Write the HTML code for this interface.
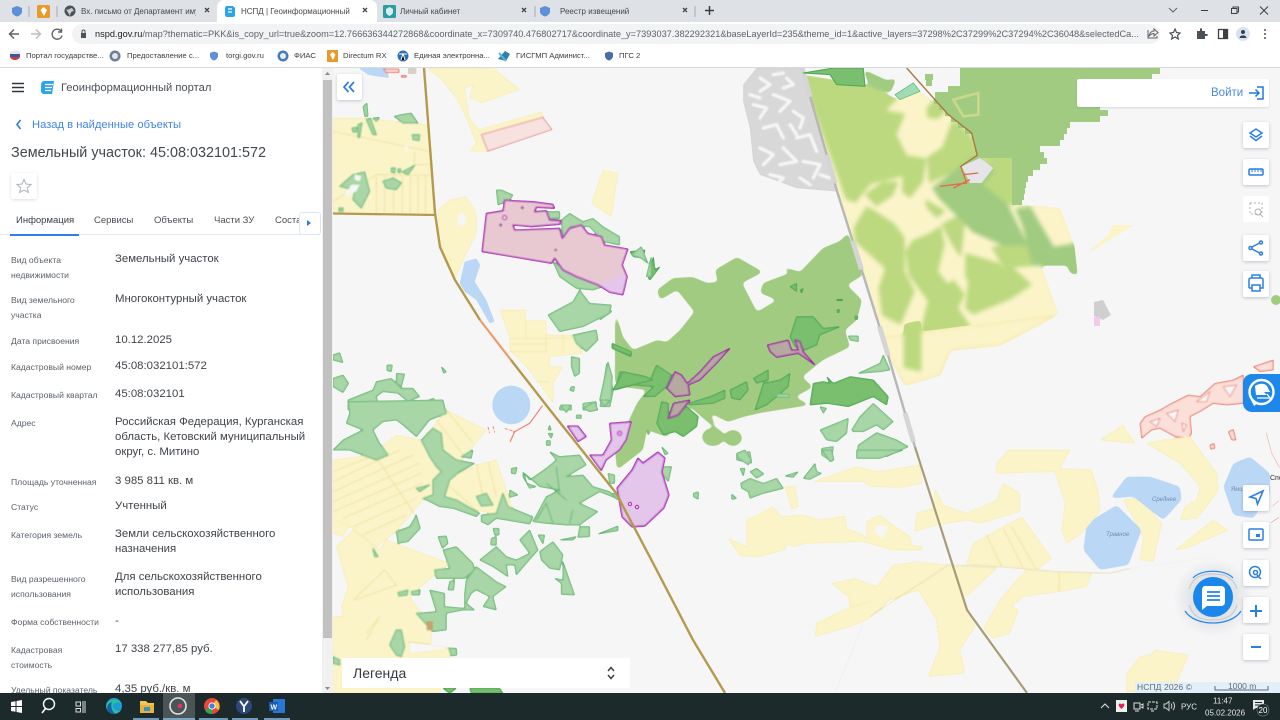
<!DOCTYPE html>
<html lang="ru"><head><meta charset="utf-8"><title>НСПД | Геоинформационный портал</title>
<style>
html,body{margin:0;padding:0;width:1280px;height:720px;overflow:hidden;background:#fff;font-family:"Liberation Sans","DejaVu Sans",sans-serif;color:#3a3f45}
svg{position:absolute;overflow:hidden}
.y{fill:#fbf4c9;stroke:#f5ecb6;stroke-width:2;stroke-linejoin:round}
.g2{fill:#bcd97f;stroke:#bcd97f;stroke-width:8;stroke-linejoin:round}
.g1{fill:#a0cb80;stroke:#a0cb80;stroke-width:6;stroke-linejoin:round}
.f{fill:#a9d6a6;stroke:#69b878;stroke-width:3;stroke-linejoin:round}
.d{fill:#7abf6e;stroke:#4ba556;stroke-width:3;stroke-linejoin:round}
.p{fill:#e3c6ea;stroke:#a92fb2;stroke-width:4;stroke-linejoin:round}
.q{fill:#b5a9a0;stroke:#a02fa8;stroke-width:4;stroke-linejoin:round}
.w{fill:#bad7f5}
.r{fill:#fbdfd9;stroke:#e8786c;stroke-width:3;stroke-linejoin:round}
.ln{fill:none;stroke:#efe3a4;stroke-width:3}
.t{position:absolute;white-space:nowrap}
.b{position:absolute;height:6px;background:#a0cb80}
.btn{position:absolute;left:1243px;width:26px;height:26px;background:#fff;border-radius:2px;box-shadow:0 1px 3px rgba(80,100,130,.35)}
.tab{position:absolute;top:5px;font-size:8px;line-height:13px;color:#45484c;white-space:nowrap}
.bm{position:absolute;top:50px;font-size:7.7px;line-height:12px;color:#3c4043;white-space:nowrap}
.l{position:absolute;left:11px;font-size:8.6px;line-height:15px;color:#5b6269;white-space:nowrap}
.v{position:absolute;left:115px;font-size:11.4px;line-height:17px;color:#3f444a;white-space:nowrap}
.pt{position:absolute;top:214px;font-size:9.5px;line-height:14px;color:#4a4f55;white-space:nowrap}
.lab{font-family:"Liberation Sans",sans-serif;font-size:6px;fill:#6f8fb5;font-style:italic}
</style></head><body>
<svg width="1280" height="720" viewBox="0 0 1280 720" style="left:0;top:0" xmlns="http://www.w3.org/2000/svg">
<defs>
<clipPath id="cm"><rect x="333" y="68" width="947" height="626"/></clipPath>
<pattern id="mh" width="30" height="13" patternUnits="userSpaceOnUse"><path d="M1,4 L13,3 M17,10 L29,9" stroke="#9cc2e6" stroke-width="2.2" fill="none"/></pattern>
<filter id="s" filterUnits="userSpaceOnUse" x="300" y="40" width="1000" height="670" color-interpolation-filters="sRGB"><feGaussianBlur stdDeviation="2"/><feComponentTransfer><feFuncA type="linear" slope="6" intercept="-2.5"/></feComponentTransfer></filter>
<filter id="s2" filterUnits="userSpaceOnUse" x="300" y="40" width="1000" height="670" color-interpolation-filters="sRGB"><feGaussianBlur stdDeviation=".7"/><feComponentTransfer><feFuncA type="linear" slope="4" intercept="-1.5"/></feComponentTransfer></filter>
</defs>
<g clip-path="url(#cm)">
<rect x="333" y="68" width="947" height="626" fill="#f6f6f7"/>

<g filter="url(#s2)"><g transform="translate(740,68) scale(.3333)">
<path fill="#d8d8d9" stroke="#c9c9ca" d="M10,50 L50,0 L185,0 L290,370 L170,360 L60,320 L40,280 L30,180 L10,100Z"/>
<path fill="none" stroke="#f6f6f7" stroke-width="10" stroke-linecap="round" stroke-linejoin="round" d="M60,30 L90,50 L60,70 M140,30 L160,50 L130,60 M100,80 L150,100 L120,130 M40,110 L80,120 L60,150 M160,130 L190,150 L180,180 M70,180 L110,170 L130,210 M170,210 L210,200 L230,250 M60,240 L100,260 L70,290 M130,240 L170,280 L120,290 M190,280 L240,290 L220,330 M90,320 L130,330 L110,350 M180,330 L210,350 M30,80 L60,90 M100,20 L130,15 M150,170 L170,200 M240,320 L270,330"/>
</g></g>

<g filter="url(#s)"><g transform="translate(740,68) scale(.3333)">
<path class="y" d="M190,25 L380,55 L465,95 L540,70 L700,200 L712,262 L815,270 L815,410 L960,420 L1000,530 L940,545 L870,500 L955,740 L680,810 L430,810 L350,560Z"/>
<path class="g2" d="M190,25 L380,55 L465,95 L430,130 L490,140 L465,200 L500,270 L490,320 L390,345 L345,400 L320,390Z"/>
<path class="g2" d="M495,265 L555,275 L545,340 L510,385 L490,370Z"/>
<path class="g2" d="M565,120 L585,100 L610,135 L590,150 L565,145Z"/>
<path class="g2" d="M640,160 L695,210 L712,260 L660,300 L570,340 L565,270 L610,240Z"/>
<path class="g2" d="M710,220 L815,270 L815,410 L730,360 L760,310 L740,270 L712,262Z"/>
<path class="g2" d="M345,480 L380,420 L400,430 L460,470 L490,510 L490,610 L520,670 L480,765 L430,740 L420,660 L440,600 L350,520Z"/>
<path class="g2" d="M520,520 L570,500 L600,480 L610,530 L590,610 L620,650 L570,700 L510,620 L500,550Z"/>
<path class="g2" d="M610,470 L650,450 L670,470 L660,560 L635,520Z"/>
<path class="g2" d="M680,560 L780,590 L780,600 L700,640 L680,630Z"/>
<path class="g2" d="M810,595 L870,650 L810,690 L700,735 L680,720 L690,625 L760,610Z"/>
<path class="g2" d="M540,810 L570,690 L640,640 L670,680 L650,720 L690,780 L620,810Z"/>
<path class="g2" d="M800,530 L860,530 L880,590 L820,595 L790,590 L760,540Z"/>
<path class="g2" d="M560,400 L610,430 L590,445 L565,420Z"/>
<path class="g2" d="M380,380 L430,345 L470,345 L455,380 L410,410Z"/>
<path class="g1" d="M580,360 L660,300 L700,270 L715,265 L760,310 L725,350 L800,410 L860,530 L790,530 L700,490 L640,430 L600,390Z"/>
<path class="g1" d="M830,425 L870,420 L940,540 L1000,530 L1010,620 L990,610 L985,590 L880,590 L850,470Z"/>
<path class="g1" d="M375,10 L440,40 L465,35 L450,70 L390,50Z"/>
</g></g>
<g filter="url(#s)">
<path class="y" d="M880,338 L1057,315 L1000,345 L950,350 L940,375 L905,385Z"/>
<path class="g2" transform="translate(600,250) scale(.3333)" d="M915,225 L960,215 L960,360 L915,350Z"/>
</g>
<g filter="url(#s)" fill="#a0cb80">
<polygon points="680,330 718,282 715,270 737,257 763,272 742,283 757,312 777,300 760,293 763,283 790,273 778,265 800,272 823,248 840,241 848,233 863,275 847,285 862,300 857,320 845,330 850,347 823,360 802,377 700,400"/>
<polygon points="657,290 673,278 693,277 707,283 718,282 722,310 710,320 693,310 677,290 660,300"/>
<polygon points="615,310 623,337 633,350 657,340 667,342 680,330 685,347 710,320 760,330 802,377 813,387 795,397 810,405 760,413 743,417 728,422 710,413 717,430 690,407 667,437 647,430 643,450 617,470 615,450 637,403 647,390 623,387 615,383"/>
<ellipse cx="713" cy="437" rx="11" ry="9"/><ellipse cx="733" cy="438" rx="9" ry="8"/>
</g>

<g filter="url(#s2)"><g transform="translate(600,250) scale(.3333)">
<path class="d" d="M45,420 L60,365 L110,375 L150,390 L170,345 L215,375 L200,410 L165,440 L130,440 L160,410 L100,405Z"/>
<path class="d" d="M170,520 L185,455 L205,460 L205,505 L260,470 L295,500 L290,530 L250,560 L225,545 L190,555Z"/>
<path class="d" d="M265,460 L330,440 L375,420 L375,445 L340,460 L270,465Z"/>
<path class="d" d="M390,420 L440,395 L445,420 L420,450 L395,445Z"/>
<path class="d" d="M460,385 L505,360 L505,390 L470,400Z"/>
<path class="d" d="M465,480 L490,400 L540,390 L570,370 L565,410 L530,440 L500,465Z"/>
<path class="d" d="M570,260 L590,200 L640,200 L670,235 L720,230 L660,255 L650,285 L615,300 L585,290Z"/>
<path class="d" d="M630,465 L640,400 L670,395 L690,400 L680,380 L700,400 L750,380 L820,390 L865,440 L860,465 L820,440 L745,470 L680,460Z"/>
<path class="d" d="M570,110 L590,100 L590,125Z M600,120 L610,115 L605,130Z M710,148 h18 v4 h-18Z M712,178 h6 v10 h-6Z M765,198 h8 v10 h-8Z M90,5 L135,0 L130,25 L100,20Z M145,85 L160,20 L165,60 L180,50 L150,90Z M36,280 L95,310 L92,320 L36,295Z"/>
<path class="f" d="M660,540 L745,505 L740,550 L710,575 L680,570Z"/>
<path class="f" d="M755,540 L780,500 L820,460 L880,515 L850,540 L830,525 L790,545 L760,545Z"/>
<path class="f" d="M770,620 L775,585 L830,548 L890,570 L925,590 L860,620 L790,610Z"/>
<path class="f" d="M775,370 L840,340 L850,315 L870,360 L840,365Z"/>
<path class="f" d="M665,595 L700,590 L695,635 L665,615Z"/>
<path class="f" d="M410,610 L450,605 L455,640 L410,630Z"/>
<path class="f" d="M745,258 L775,258 L775,275 L750,270Z"/>
<path class="f" d="M660,470 L680,475 L670,490Z"/>
<path class="f" d="M180,650 L215,650 L205,695 L185,670Z"/>
<path class="f" d="M0,470 L20,340 L40,420 L30,470Z"/>
<path class="f" d="M0,170 H25 L35,185 L0,210Z"/>
<path class="f" d="M185,590 L205,610 L195,615Z M35,675 L45,690 L30,700Z M140,540 L150,545 L145,555Z"/>
<path class="f" d="M530,432 H568 V442 H530Z"/>
<path class="q" d="M200,415 L225,365 L245,375 L262,400 L300,365 L340,320 L390,295 L350,340 L300,390 L265,405 L270,435 L225,440Z"/>
<path class="q" d="M205,505 L220,460 L270,450 L235,495Z"/>
<path class="q" d="M502,285 L565,270 L575,300 L595,300 L585,270 L600,275 L610,305 L645,345 L595,310 L530,322 L510,305Z"/>
</g></g>

<g filter="url(#s2)"><g transform="translate(1100,360) scale(.3333)">
<path class="r" d="M120,190 L135,170 L180,150 L215,130 L265,105 L300,110 L345,70 L400,60 L430,45 L430,130 L380,135 L340,130 L300,155 L270,170 L275,220 L265,235 L225,230 L180,205 L155,210 L125,235Z"/>
<path fill="#f6f6f7" stroke="#e8786c" stroke-width="2" d="M200,160 L235,150 L225,185Z M290,125 L330,95 L320,125Z M370,80 L410,75 L390,110Z M150,185 L180,175 L170,200Z M245,190 L260,195 L250,215Z"/>
<path class="r" d="M385,215 L400,208 L408,240 L395,240Z M330,255 L342,250 L345,265 L332,268Z M460,20 L520,0 L520,30 L480,35Z"/>
<path fill="none" stroke="#e8786c" stroke-width="3" d="M498,215 L515,280 L540,325 M510,490 L540,470 M515,440 L540,420"/>
<path class="y" d="M0,240 L70,195 L105,250Z"/>
<path class="y" d="M140,250 L190,240 L270,230 L350,340 L355,390 L320,440 L290,475 L240,480 L255,440 L290,420 L300,380 L240,310Z"/>
<path class="y" d="M225,570 L340,480 L385,510 L260,565Z"/>
<path class="y" d="M70,420 L120,410 L185,490 L160,605 L120,600 L130,530Z"/>
<path class="y" d="M80,995 L80,940 L120,890 L150,885 L165,870 L265,885 L220,995Z"/>
</g></g>
<g filter="url(#s)"><g transform="translate(1100,360) scale(.3333)">
<path class="w" d="M30,415 L80,350 L150,350 L240,380 L245,420 L190,480 L150,450 L100,410Z"/>
<path class="w" d="M370,380 L400,310 L450,290 L510,340 L510,400 L460,475 L400,465Z"/>
<path class="w" d="M-50,570 L-40,490 L50,435 L125,510 L85,615 L0,630Z"/>
</g></g>
<text class="lab" x="1152" y="501">Среднее</text>
<text class="lab" x="1106" y="536">Травное</text>
<text class="lab" x="1231" y="491">Ямш</text>
<text x="1270" y="480" font-size="7" fill="#333">Спе</text>
<path d="M1090,250 L1108,235 L1113,225 L1134,225 L1105,243 L1090,252Z" fill="#fbf4c9"/>
<path d="M1094,302 L1103,300 L1111,315 L1103,320 L1094,316Z" fill="#cfcfd0"/>
<path d="M1094,317 H1100 V326 H1094Z" fill="#f6c8ea"/>
<circle cx="1276" cy="300" r="5" fill="#a0cb80"/>

<g filter="url(#s2)"><g transform="translate(650,450) scale(.3333)">
<path class="y" d="M490,95 L620,50 L680,65 L810,45 L815,100 L755,112 L660,110 L640,95Z"/>
<path class="y" d="M405,110 L435,108 L445,170 L425,178Z"/>
<path class="y" d="M235,265 L290,290 L290,210 L370,170 L395,200 L460,195 L510,210 L585,198 L590,235 L630,250 L650,265 L650,215 L690,195 L730,225 L780,260 L785,285 L818,290 L815,300 L760,300 L725,300 L640,275 L470,280 L430,290 L410,280 L405,300 L330,320 L270,318Z"/>
<path d="M680,225 L715,230 L700,265 L675,245Z" fill="#f6f6f7"/>
<path class="y" d="M795,245 L800,190 L850,175 L855,115 L880,165 L950,190 L1040,150 L1060,100 L1110,130 L1110,185 L1040,205 L990,220 L950,210 L860,225Z"/>
<path class="y" d="M1040,70 L1040,40 L1075,0 L1260,0 L1230,55 L1325,60 L1345,125 L1350,185 L1295,250 L1250,280 L1235,240 L1245,160 L1215,65Z"/>
<path class="y" d="M970,280 L1115,200 L1205,325 L1160,360 L1050,350 L950,340Z"/>
<path class="y" d="M545,400 L615,385 L680,410 L730,345 L800,335 L895,345 L1040,355 L960,430 L940,440 L975,530 L930,600 L945,670 L835,680 L870,590 L860,510 L805,420 L720,450 L650,510 L600,530 L495,560 L500,520 L580,480 L660,455 L600,470 L595,440Z"/>
<path class="y" d="M1000,535 L1050,450 L1100,390 L1130,360 L1325,370 L1310,410 L1230,425 L1120,440 L1085,470 L1105,480 L1080,550 L1030,565Z"/>
<path class="ln" d="M1010,255 L1055,350 M1060,235 L1120,355 M1085,230 L1160,360 M1228,365 L1228,425"/>
<path fill="url(#mh)" d="M740,465 L820,460 L860,520 L865,590 L840,640 L810,730 L590,730 L600,690 L690,650 L680,610 L650,590 L645,570 L690,490Z"/>
<path fill="none" stroke="#e6e6ea" stroke-width="3" d="M640,520 L555,730"/>
<path fill="none" stroke="#ece6c5" stroke-width="4" d="M895,345 L1050,350 L1220,365 L1380,370 L1440,355"/>
<path fill="none" stroke="#e8dfa8" stroke-width="3" d="M895,345 L660,500"/>
<path fill="none" stroke="#eee" stroke-width="3" d="M1440,355 L1700,320"/>
<path class="f" d="M260,10 L285,0 L305,30 L295,45 L265,25Z"/>
<path class="f" d="M300,65 L320,55 L342,72 L320,85Z"/>
<path class="f" d="M272,100 L300,85 L340,100 L380,85 L400,115 L340,130 L300,145 L295,125 L275,115Z"/>
<path class="f" d="M405,78 L445,65 L430,82Z"/>
<path class="f" d="M460,85 L495,40 L500,65 L515,70 L480,88Z"/>
<path class="f" d="M245,132 L260,145 L245,148Z"/>
<path class="f" d="M130,130 L145,125 L145,148 L130,140Z"/>
<path class="f" d="M270,55 L285,55 L280,78Z"/>
<path class="f" d="M515,0 L545,0 L552,30 L540,35Z"/>
<path class="f" d="M620,0 L760,0 L690,25 L620,25Z"/>
</g></g>

<g filter="url(#s2)"><g transform="translate(333,68) scale(.3333)">
<path class="y" d="M0,150 L85,150 L285,170 L305,442 L0,437Z"/>
<path class="ln" d="M0,190 L290,250 M245,250 L245,290 L300,290 M0,400 L130,320 L300,322 M130,320 V437 M155,320 V437 M182,320 V437 M208,320 V437 M232,320 V437 M255,320 V437 M278,320 V437"/>
<circle cx="220" cy="240" r="6" fill="#f6f6f7"/>
<path class="y" d="M285,0 L480,0 L560,65 L490,90 L445,105 L410,90 L420,50 L395,60 L410,150 L450,200 L465,250 L410,250 L430,225 L400,150 L370,90 L330,40Z"/>
<path class="y" d="M438,185 L625,132 L632,148 L445,200Z"/>
<path fill="#f7e2e0" stroke="#e58a8a" stroke-width="2.5" d="M445,200 L630,148 L658,185 L465,250Z"/>
<path class="w" d="M75,0 H155 L170,30 L130,25 L105,20Z"/>
<path class="r" d="M152,3 H198 V14 H160Z M205,22 H220 V28 H205Z"/>
<path fill="#d7d0c7" d="M225,0 H250 V18 H225Z"/>
<path class="f" d="M90,115 L102,105 L105,145 L95,145Z M100,155 L112,150 L130,200 L120,200Z M120,150 L140,148 L130,160Z M183,145 L205,140 L235,135 L255,165 L210,165Z M238,200 L260,200 L258,218 L240,215Z M57,180 L72,178 L70,192 L60,192Z M75,170 L87,165 L80,208 L75,208Z M175,300 L187,300 L185,315 L175,312Z M208,312 L245,292 L225,320Z M195,303 h8 v10 h-8Z"/>
<path class="f" d="M20,355 L60,320 L95,312 L110,370 L85,420 L60,395 L65,365 L40,360Z"/>
<path class="f" d="M150,340 L180,330 L205,345 L190,365 L160,360Z"/>
<path fill="#f6f6f7" d="M65,318 L85,325 L80,340 L65,335Z M55,350 L80,350 L70,370 L40,385 L35,380Z"/>
<path class="f" d="M18,420 H30 V430 H18Z"/>
</g></g>

<g filter="url(#s2)"><g transform="translate(333,170) scale(.3333)">
<path class="y" d="M315,120 L350,90 L400,80 L430,130 L430,190 L400,250 L370,320 L350,300 L320,230Z"/>
<ellipse cx="386" cy="148" rx="13" ry="18" fill="#f6f6f7"/>
<path class="y" d="M500,420 L578,420 L578,452 L640,452 L640,495 L720,495 L750,550 L650,560 L650,590 L690,590 L660,640 L660,700 L620,640 L580,590 L530,540 L530,500Z"/>
<path class="ln" style="stroke-width:2" d="M530,505 H720 M530,522 H640 M530,545 H640 M578,452 V505 M640,495 V545 M690,495 V550 M600,635 H650"/>
<path class="y" d="M810,0 L855,10 L835,140 L775,100Z"/>
<path class="w" d="M380,340 L395,275 L430,265 L442,285 L425,335 L460,390 L485,455 L470,460 L430,390 L395,365Z"/>
<path class="f" d="M490,60 L505,60 L540,75 L530,90 L495,105Z"/>
<path class="f" d="M640,125 L680,125 L680,145 L640,145Z"/>
<path class="f" d="M685,150 L710,130 L750,155 L780,145 L810,170 L860,200 L860,225 L810,215 L770,170 L715,170 L690,205Z"/>
<path class="f" d="M660,275 L700,300 L810,350 L780,360 L730,355 L680,320Z"/>
<path class="f" d="M645,435 L720,395 L740,360 L770,400 L835,405 L830,430 L750,470 L680,485Z"/>
<path class="f" d="M720,495 L790,480 L795,510 L760,545 L730,520Z"/>
<path class="f" d="M715,560 L740,565 L740,610 L725,620 L715,590Z"/>
<path class="f" d="M800,690 L825,575 L838,620 L835,690 L815,710Z"/>
<path class="f" d="M895,255 L925,230 L945,280 L925,265Z M940,320 L955,260 L955,320Z"/>
<path class="f" d="M0,625 L30,615 L47,640 L30,668 L0,650Z"/>
<path class="f" d="M0,555 L20,548 L30,578 L0,570Z"/>
<path class="f" d="M162,585 L178,585 L175,605 L162,602Z M325,590 L340,605 L332,610Z"/>
<path class="f" d="M45,690 L120,660 L130,635 L175,625 L205,655 L240,655 L260,680 L225,695 L195,670 L150,665 L130,680 L140,720 L45,720Z"/>
<path class="f" d="M240,710 L300,685 L340,720 L240,720Z"/>
<path class="f" d="M190,610 L215,612 L205,650 L190,640Z"/>
<ellipse cx="535" cy="705" rx="57" ry="58" class="w"/>
<path class="d" d="M840,660 L870,605 L940,620 L960,630 L880,650Z M838,520 L895,545 L895,558 L838,535Z"/>
<path class="f" d="M680,710 L715,705 L715,720 L680,720Z M750,700 L790,695 L790,720 L750,720Z M715,650 L725,650 L722,665 L710,660Z"/>
<path class="p" style="fill:#e8c9d2" d="M447,245 L460,130 L510,122 L515,90 L540,92 L600,95 L660,103 L665,115 L610,112 L605,125 L640,122 L650,150 L685,152 L680,163 L595,170 L540,165 L545,180 L680,175 L688,205 L710,175 L745,165 L765,190 L805,200 L815,225 L885,237 L868,285 L883,320 L870,375 L830,367 L795,345 L730,320 L690,300 L665,265 L655,280Z"/>
<path fill="#e3c6ea" d="M800,343 L875,310 L880,322 L868,372 L830,365Z"/>
<circle cx="515" cy="143" r="6" fill="#f6f6f7" stroke="#a92fb2" stroke-width="3"/>
<circle cx="568" cy="113" r="4" fill="#a0409a"/><circle cx="503" cy="165" r="4" fill="#a0409a"/><circle cx="668" cy="240" r="3.5" fill="#a0409a"/>
</g></g>

<g filter="url(#s2)"><g transform="translate(333,400) scale(.3333)">
<path class="y" d="M0,180 L110,165 L190,105 L265,120 L300,80 L340,30 L460,90 L420,140 L385,180 L320,300 L270,300 L190,395 L130,440 L60,385 L0,370Z"/>
<path class="y" d="M340,240 L430,195 L490,180 L520,270 L545,340 L470,340 L335,300Z"/>
<path class="y" d="M10,440 L60,390 L140,450 L160,420 L350,490 L300,530 L230,590 L295,680 L295,730 L230,725 L230,760 L360,745 L340,790 L320,880 L0,880 L0,650 L30,650 L25,620 L45,560Z"/>
<path class="y" d="M0,360 L50,375 L30,410 L0,400Z"/>
<path class="ln" d="M0,215 L140,160 M0,245 L200,150 M0,275 L240,165 M0,305 L260,190 M0,335 L265,220 M30,355 L270,250 M60,380 L250,295 M90,405 L220,345 M135,180 L250,350 M340,30 L420,130 M310,60 L395,170 M280,95 L370,190 M430,190 L450,290 M465,185 L490,290 M335,245 L440,340 M60,600 L155,510 L190,555 L65,600 M100,720 L140,650 L100,700 M225,725 L360,745"/>
<path class="f" d="M0,150 L30,120 L90,90 L40,70 L50,40 L45,5 L330,0 L340,40 L290,60 L250,110 L210,75 L190,60 L150,65 L120,90 L140,130 L165,165 L130,180 L90,165 L50,150Z"/>
<path class="f" d="M265,120 L300,85 L325,100 L330,150 L370,180 L425,190 L380,215 L350,240 L335,290 L370,300 L440,340 L430,350 L360,325 L320,320 L270,295 L300,285 L300,240 L325,215 L310,200 L290,170Z"/>
<path class="f" d="M445,345 L490,340 L510,280 L525,320 L600,350 L590,372 L490,355 L465,375 L445,365Z"/>
<path class="f" d="M430,290 L460,280 L480,315 L445,318Z M530,270 L555,285 L530,292Z M250,265 L290,255 L260,275Z M385,170 L420,150 L415,175Z M535,205 L552,202 L548,222 L535,220Z"/>
<path class="f" d="M600,365 L640,290 L680,270 L620,260 L575,220 L590,240 L640,205 L670,180 L650,155 L680,170 L740,165 L760,195 L700,230 L750,225 L780,260 L830,275 L850,295 L800,275 L740,310 L795,335 L740,375 L700,375 L640,370Z"/>
<path fill="none" stroke="#5fb06f" stroke-width="2.5" d="M610,360 L640,310 L660,370 M640,250 L700,300 M670,200 L680,280 M720,330 L710,370"/>
<path class="f" d="M740,380 L770,380 L770,410 L735,412Z M680,420 L730,410 L720,420Z M795,402 L855,378 L855,392Z M645,100 L660,100 L655,115Z M640,122 h12 v14 h-12Z M682,15 L715,15 L700,38Z M730,45 H745 V55 H730Z M750,25 L785,5 L795,30 L770,35Z M800,0 H830 L815,20Z M615,405 L635,405 L630,432Z M480,385 H498 V405 H485Z M475,415 L490,410 L490,435 L473,435Z M315,410 L340,408 L345,430 L328,445Z"/>
<path class="f" d="M620,455 L660,425 L690,465 L680,510 L650,505 L625,480Z"/>
<path class="f" d="M690,485 L725,585 L685,583 L685,550 L665,535 L690,540Z"/>
<path class="f" d="M440,480 L490,440 L520,470 L550,480 L590,460 L560,420 L590,390 L615,450 L580,490 L550,525 L545,495 L520,495 L525,530 L480,500Z"/>
<path class="f" d="M330,450 L370,440 L420,490 L425,510 L395,535 L310,535 L305,510 L350,505Z"/>
<path class="f" d="M400,540 L430,500 L490,545 L520,560 L480,590 L490,630 L450,620 L470,590 L430,570 L415,580 L400,610 L425,630 L390,630 L340,640 L340,690 L300,695 L250,640 L310,635 L290,570 L335,580 L335,620 L395,625 L395,580Z"/>
<path class="f" d="M190,395 L230,380 L250,345 L262,385 L225,425 L195,430Z"/>
<path class="f" d="M170,735 L190,690 L205,690 L215,740 L205,770 L190,765Z"/>
<path class="f" d="M348,745 L370,745 L372,765 L355,768Z M195,578 L225,570 L222,585 L198,588Z M235,575 L262,570 L260,585 L238,585Z M120,445 L135,470 L125,470Z M350,545 L365,540 L362,570 L345,570Z"/>
<path class="f" d="M0,770 L20,780 L20,795 L0,790Z M650,75 L655,90 L645,90Z M570,215 L582,250 L610,260 L590,265 L570,230Z M825,220 L845,225 L845,250 L830,250Z M840,280 L885,275 L885,298 L850,298Z"/>
<path class="d" d="M330,865 L370,865 L350,880Z M410,865 L500,865 L510,880 L415,880Z"/>
<path fill="#c9a36b" stroke="#b67c5a" d="M282,665 H298 V690 H282Z"/>
<path fill="none" stroke="#ec8f7e" stroke-width="4" stroke-linecap="round" stroke-dasharray="10 5" d="M465,80 L470,100 M480,78 L485,98 M515,85 L545,95"/>
<path fill="none" stroke="#ec7f6c" stroke-width="4" d="M630,15 L590,70 L545,95 L530,128"/>
<path class="p" d="M703,78 H735 L760,110 L735,125Z"/>
<path class="p" d="M770,165 L810,165 L835,120 L830,70 L895,65 L880,120 L860,150 L820,180 L805,212Z"/>
<circle cx="860" cy="100" r="6" fill="#e3c6ea" stroke="#a92fb2" stroke-width="3"/>
</g></g>
<path filter="url(#s2)" class="p" style="stroke-width:1.4" d="M617,488 L632,470 L638,458 L643,463 L658,452 L665,458 L662,472 L669,495 L664,508 L645,526 L632,527 L622,517Z"/>
<circle cx="630" cy="504" r="1.7" fill="#e3c6ea" stroke="#a92fb2"/><circle cx="637" cy="507" r="1.7" fill="#e3c6ea" stroke="#a92fb2"/>

<path fill="none" stroke="#b49a4c" stroke-width="2.2" d="M333,213.5 L436,215"/>
<path fill="none" stroke="#b49a4c" stroke-width="2.4" stroke-linejoin="round" d="M424,68 L435,213 L440,247 L455,280 L480,320"/>
<path fill="none" stroke="#ec9c6a" stroke-width="2.2" d="M480,320 L511,360"/>
<path fill="none" stroke="#b49a4c" stroke-width="2.4" stroke-linejoin="round" d="M511,360 L550,410 L616,493 L653,563 L693,640 L725,693"/>
<path fill="none" stroke="#b7b7b8" stroke-width="2.4" d="M802,68 L837,191 L883,338 L915,447"/>
<path fill="none" stroke="#d5d5d6" stroke-width="5" stroke-dasharray="30 60" d="M802,68 L837,191 L883,338 L915,447"/>
<path fill="none" stroke="#a89c78" stroke-width="2.2" d="M915,447 L952,563 L967,610 L1027,693"/>
<path fill="#dfeefb" opacity=".85" d="M1135,682 H1280 V694 H1135Z"/>
<path fill="none" stroke="#5a6a75" d="M1215,686 V690 H1268 V686"/>
<text x="1137" y="690" font-size="8.5" fill="#5f6c77" letter-spacing=".1">НСПД 2026 ©</text>
<text x="1228" y="689" font-size="8.5" fill="#5f6c77">1000 m</text>
</g>
</svg>

<div class="b" style="top:68px;left:960px;width:200px"></div>
<div class="b" style="top:74px;left:960px;width:192px"></div>
<div class="b" style="top:74px;left:925px;width:8px"></div>
<div class="b" style="top:80px;left:960px;width:175px"></div>
<div class="b" style="top:80px;left:926px;width:6px"></div>
<div class="b" style="top:86px;left:948px;width:170px"></div>
<div class="b" style="top:92px;left:935px;width:165px"></div>
<div class="b" style="top:98px;left:934px;width:166px"></div>
<div class="b" style="top:104px;left:939px;width:161px"></div>
<div class="b" style="top:110px;left:945px;width:163px"></div>
<div class="b" style="top:116px;left:951px;width:149px"></div>
<div class="b" style="top:122px;left:958px;width:112px"></div>
<div class="b" style="top:128px;left:965px;width:102px"></div>
<div class="b" style="top:134px;left:972px;width:92px"></div>
<div class="b" style="top:140px;left:974px;width:86px"></div>
<div class="b" style="top:146px;left:975px;width:65px"></div>
<div class="b" style="top:152px;left:976px;width:68px"></div>
<div class="b" style="top:158px;left:1012px;width:35px"></div>
<div class="b" style="top:164px;left:1012px;width:28px"></div>
<div class="b" style="top:170px;left:1012px;width:21px"></div>
<div class="b" style="top:176px;left:1012px;width:16px"></div>
<div class="b" style="top:182px;left:1012px;width:14px"></div>
<div class="b" style="top:188px;left:1012px;width:13px"></div>
<div class="b" style="top:194px;left:1012px;width:12px"></div>
<div class="b" style="top:200px;left:1012px;width:10px;height:5px"></div>
<svg width="1280" height="720" viewBox="0 0 1280 720" style="left:0;top:0">
<g transform="translate(740,68) scale(.3333)">
<path fill="#9fdcb2" stroke="#55b27a" stroke-width="2" d="M465,80 L520,45 L540,70 L480,95Z"/>
<path class="d" d="M190,15 L280,0 L370,0 L375,55 L290,50 L270,20Z"/>
<path fill="none" stroke="#c8d98c" stroke-width="8" d="M640,95 L715,75 L715,140 L670,145Z"/>
<path fill="#e5e5e9" d="M665,295 L720,270 L760,300 L725,345 L690,345Z"/>
<path fill="none" stroke="#e8684a" stroke-width="4" d="M662,295 L680,345 L600,355 M640,360 L690,335 M670,320 L715,315"/>
<path fill="none" stroke="#a9773a" stroke-width="4" d="M500,0 L625,140 L695,195 L712,262 L660,297"/>
</g>
</svg>

<div style="position:absolute;left:0;top:68px;width:322px;height:626px;background:#fff;overflow:hidden"></div>
<div style="position:absolute;left:322px;top:68px;width:11px;height:626px;background:#f1f1f1"></div>
<div style="position:absolute;left:323px;top:80px;width:9px;height:558px;background:#c1c1c1"></div>
<svg width="11" height="626" style="left:322px;top:68px"><path d="M5.5,4 L8,7 H3Z M5.5,622 L8,619 H3Z" fill="#8a8a8a"/></svg>

<svg width="322" height="70" style="left:0;top:68px">
<path d="M12,15.5 H24 M12,19.5 H24 M12,23.5 H24" stroke="#30353a" stroke-width="1.4"/>
<path d="M44,13 H54 L52,26 H44 C41.5,26 41,24 41,22 V18 C41,15 42,13 44,13Z" fill="#2aa5ea"/>
<path d="M45,16.5 H53 M45,19.5 H52 M45,22.5 H51" stroke="#fff" stroke-width="1.2"/>
<path d="M20.5,52 L17,56.5 L20.5,61" fill="none" stroke="#2f7be0" stroke-width="1.6"/>
</svg>
<div style="position:absolute;left:11px;top:173px;width:26px;height:26px;border-radius:2px;box-shadow:0 1px 3px rgba(60,80,110,.18)"></div>
<svg width="26" height="26" style="left:11px;top:173px"><path d="M13,6.5 L15,11 L20,11.5 L16.3,14.7 L17.4,19.5 L13,17 L8.6,19.5 L9.7,14.7 L6,11.5 L11,11Z" fill="none" stroke="#aeb3b8"/></svg>
<div class="t" style="left:61px;top:81px;font-size:11.2px;line-height:14px;color:#4a4f55">Геоинформационный портал</div>
<div class="t" style="left:32px;top:118px;font-size:11.2px;line-height:14px;color:#4285e6">Назад в найденные объекты</div>
<div class="t" style="left:11px;top:144px;font-size:14.4px;line-height:18px;color:#43484e">Земельный участок: 45:08:032101:572</div>

<div class="pt" style="left:16px;color:#3a4046">Информация</div>
<div class="pt" style="left:94px">Сервисы</div>
<div class="pt" style="left:154px">Объекты</div>
<div class="pt" style="left:214px">Части ЗУ</div>
<div class="pt" style="left:275px;width:24px;overflow:hidden">Соста</div>
<div style="position:absolute;left:0;top:234px;width:320px;height:1px;background:#e4e9f0"></div>
<div style="position:absolute;left:10px;top:234px;width:69px;height:2px;background:#2f80e6"></div>
<div style="position:absolute;left:299px;top:212px;width:20px;height:21px;background:#fff;border:1px solid #dce6f3;border-radius:3px"></div>
<svg width="6" height="8" style="left:306px;top:219px"><path d="M1,1 L5,4 L1,7Z" fill="#2f7be0"/></svg>

<div class="l" style="top:253px">Вид объекта</div><div class="l" style="top:268px">недвижимости</div>
<div class="v" style="top:251px">Земельный участок</div>
<div class="l" style="top:293px">Вид земельного</div><div class="l" style="top:308px">участка</div>
<div class="v" style="top:291px">Многоконтурный участок</div>
<div class="l" style="top:334px">Дата присвоения</div><div class="v" style="top:332px">10.12.2025</div>
<div class="l" style="top:360px">Кадастровый номер</div><div class="v" style="top:358px">45:08:032101:572</div>
<div class="l" style="top:388px">Кадастровый квартал</div><div class="v" style="top:386px">45:08:032101</div>
<div class="l" style="top:416px">Адрес</div>
<div class="v" style="top:414px">Российская Федерация, Курганская</div>
<div class="v" style="top:429px">область, Кетовский муниципальный</div>
<div class="v" style="top:444px">округ, с. Митино</div>
<div class="l" style="top:475px">Площадь уточненная</div><div class="v" style="top:473px">3 985 811 кв. м</div>
<div class="l" style="top:500px">Статус</div><div class="v" style="top:498px">Учтенный</div>
<div class="l" style="top:528px">Категория земель</div>
<div class="v" style="top:526px">Земли сельскохозяйственного</div><div class="v" style="top:541px">назначения</div>
<div class="l" style="top:572px">Вид разрешенного</div><div class="l" style="top:587px">использования</div>
<div class="v" style="top:569px">Для сельскохозяйственного</div><div class="v" style="top:584px">использования</div>
<div class="l" style="top:615px">Форма собственности</div><div class="v" style="top:613px">-</div>
<div class="l" style="top:643px">Кадастровая</div><div class="l" style="top:658px">стоимость</div>
<div class="v" style="top:641px">17 338 277,85 руб.</div>
<div class="l" style="top:683px">Удельный показатель</div><div class="v" style="top:681px">4,35 руб./кв. м</div>

<div style="position:absolute;left:337px;top:74px;width:25px;height:26px;background:#fff;border-radius:2px;box-shadow:0 1px 3px rgba(80,100,130,.3)"></div>
<svg width="25" height="26" style="left:337px;top:74px"><path d="M11.5,8 L7,13 L11.5,18 M17,8 L12.5,13 L17,18" fill="none" stroke="#2f7be0" stroke-width="1.7"/></svg>
<div style="position:absolute;left:1077px;top:79px;width:192px;height:28px;background:#fff;border-radius:2px;box-shadow:0 1px 2px rgba(80,100,130,.2)"></div>
<div class="t" style="left:1211px;top:86px;font-size:11.5px;line-height:14px;color:#4a88e6">Войти</div>
<svg width="18" height="16" style="left:1248px;top:85px"><path d="M1,8 H11 M7.5,4.5 L11,8 L7.5,11.5 M9,2 H15 V14 H9" fill="none" stroke="#1f78e0" stroke-width="1.5"/></svg>

<div class="btn" style="top:122px"></div><div class="btn" style="top:159px"></div>
<div class="btn" style="top:196px;box-shadow:none"></div><div class="btn" style="top:235px"></div>
<div class="btn" style="top:271px"></div><div class="btn" style="top:485px"></div>
<div class="btn" style="top:522px"></div><div class="btn" style="top:560px"></div>
<div class="btn" style="top:597px"></div><div class="btn" style="top:634px"></div>
<svg width="26" height="560" style="left:1243px;top:122px" fill="none" stroke="#2a7fe3" stroke-width="1.5">
<path d="M13,7 L19,11 L13,15 L7,11Z M7,14 L13,18.5 L19,14"/>
<rect x="6" y="47" width="14" height="6" rx="1"/><path d="M9,47 V50 M12,47 V50 M15,47 V50 M18,47 V50" stroke-width="1"/>
<g stroke="#a9adb2" stroke-width=".9"><path d="M7,81 H19 V92 H7Z" stroke-dasharray="2 2"/><circle cx="15" cy="90" r="3"/><path d="M17,92 L20,95"/></g>
<circle cx="7.5" cy="126" r="1.5"/><circle cx="18" cy="120.5" r="1.5"/><circle cx="18" cy="131.5" r="1.5"/><path d="M9,125 L16.5,121 M9,127 L16.5,131"/>
<path d="M9,156 V153 H17 V156 M6,166 V158 C6,156.5 7,156 8,156 H18 C19,156 20,156.5 20,158 V166 H17 M9,166 H6 M9,163 H17 V169 H9Z"/>
<path d="M20,369 L7,375 L13,376.5 L14.5,382Z" stroke-width="1.6"/>
<rect x="6" y="407" width="14" height="11" rx="1"/><rect x="13" y="412" width="4" height="3" fill="#2a7fe3" stroke="none"/>
<circle cx="12" cy="450" r="5.5"/><circle cx="12.5" cy="450.5" r="2"/><path d="M14,453 L18,457"/>
<path d="M13,483 V495 M7,489 H19" stroke-width="2"/>
<path d="M8,525 H18" stroke-width="2"/>
</svg>

<div style="position:absolute;left:1243px;top:374px;width:37px;height:38px;background:#1d87ea;border-radius:9px 0 0 9px"></div>
<svg width="37" height="38" style="left:1243px;top:374px"><circle cx="18.5" cy="18" r="12" fill="#1d87ea" stroke="#fff" stroke-width="2.4"/><path d="M12,12 C16,9 22,9 24,12 L27,18 L21,18 L24,21 H13Z" fill="#fff"/><path d="M14,24 H27 L24,20" fill="none" stroke="#fff" stroke-width="1.3"/><path d="M8,26 L11,32 L15,29" fill="#fff"/></svg>

<div style="position:absolute;left:1173px;top:558px;width:80px;height:80px;border-radius:50%;background:radial-gradient(circle,rgba(110,120,135,.18) 30%,rgba(110,120,135,0) 70%)"></div>
<svg width="60" height="64" style="left:1183px;top:565px" fill="none">
<path d="M10,13 C18,4 42,4 50,13" stroke="#2a8be8" stroke-width="1.3"/>
<path d="M6,24 C10,12 18,9 30,9 C42,9 50,12 54,24" stroke="#c6ccd3" stroke-width="1.2"/>
<path d="M6,40 C10,52 18,55 30,55 C42,55 50,52 54,40" stroke="#c6ccd3" stroke-width="1.2"/>
<path d="M2,46 C12,62 48,62 58,46" stroke="#2a8be8" stroke-width="1.3"/>
<circle cx="30" cy="32" r="20" fill="#1b87ea"/>
<path d="M22,21 H38 C41,21 42,23 42,25 V37 C42,40 40,41 38,41 H24 L19,45 V25 C19,23 20,21 22,21Z" fill="#fff"/>
<path d="M24,27 H37 M24,31 H37 M24,35 H37" stroke="#1b87ea" stroke-width="1.8"/>
</svg>

<div style="position:absolute;left:342px;top:658px;width:288px;height:30px;background:#fff"></div>
<div class="t" style="left:353px;top:665px;font-size:14px;line-height:16px;color:#343a40">Легенда</div>
<svg width="10" height="16" style="left:606px;top:665px"><path d="M2,6 L5,2.5 L8,6 M2,10 L5,13.5 L8,10" fill="none" stroke="#343a40" stroke-width="1.4"/></svg>

<div style="position:absolute;left:0;top:0;width:1280px;height:22px;background:#dee1e6"></div>
<div style="position:absolute;left:0;top:22px;width:1280px;height:46px;background:#fff"></div>
<div style="position:absolute;left:0;top:67px;width:1280px;height:1px;background:#d8dadd"></div>
<div style="position:absolute;left:217px;top:0;width:160px;height:22px;background:#fff;border-radius:7px 7px 0 0"></div>
<div style="position:absolute;left:72px;top:24px;width:1088px;height:20px;background:#f1f3f4;border-radius:10px"></div>
<div class="tab" style="left:81px;width:115px;overflow:hidden">Вх. письмо от Департамент иму</div>
<div class="tab" style="left:241px;width:110px;overflow:hidden">НСПД | Геоинформационный п</div>
<div class="tab" style="left:400px">Личный кабинет</div>
<div class="tab" style="left:560px">Реестр извещений</div>
<div class="t" style="left:95px;top:28px;font-size:9.2px;line-height:12px;color:#3c4043"><span style="color:#202124">nspd.gov.ru</span><span style="color:#5f6368">/map?thematic=PKK&amp;is_copy_url=true&amp;zoom=12.766636344272868&amp;coordinate_x=7309740.476802717&amp;coordinate_y=7393037.382292321&amp;baseLayerId=235&amp;theme_id=1&amp;active_layers=37298%2C37299%2C37294%2C36048&amp;selectedCa...</span></div>
<div class="bm" style="left:26px">Портал государстве...</div>
<div class="bm" style="left:127px">Предоставление с...</div>
<div class="bm" style="left:226px">torgi.gov.ru</div>
<div class="bm" style="left:294px">ФИАС</div>
<div class="bm" style="left:343px">Directum RX</div>
<div class="bm" style="left:414px">Единая электронна...</div>
<div class="bm" style="left:516px">ГИСГМП Админист...</div>
<div class="bm" style="left:619px">ПГС 2</div>

<svg width="1280" height="68" style="left:0;top:0">
<path d="M17,6 L22,8 V12 C22,14 19,16 17,16.5 C15,16 12,14 12,12 V8Z" fill="#5f8fd8"/>
<path d="M29,6 V17 M57,6 V17 M535,6 V17 M695,6 V17" stroke="#a8abb0"/>
<rect x="37" y="5" width="13" height="13" rx="1.5" fill="#e89a2c"/><path d="M43.5,7 L47,10 L44,16 L40.5,10Z" fill="#fff"/>
<circle cx="70" cy="11" r="5.5" fill="#4c5157"/><path d="M66,9 C68,11 70,8 72,8 L74,11 C71,11 70,14 70,16" fill="#c9ccd0"/>
<path d="M227,6 H233 L235,8 V15 C235,16 234,17 233,17 H227 C226,17 225,16 225,15 V8 C225,7 226,6 227,6Z" fill="#2aa5ea"/><path d="M228,9 H232 M228,12 H232" stroke="#fff" stroke-width="1.2"/>
<rect x="383" y="5" width="13" height="13" rx="1.5" fill="#2a9d9c"/><path d="M389.5,7 L393,9 V12 C393,14 391,15 389.5,16 C388,15 386,14 386,12 V9Z" fill="#d8ecf5"/>
<path d="M545,6 L550,8 V12 C550,14 547,16 545,16.5 C543,16 540,14 540,12 V8Z" fill="#5f8fd8"/>
<path d="M205,8 L209,12 M209,8 L205,12 M363,8 L367,12 M367,8 L363,12 M522,8 L526,12 M526,8 L522,12 M683,8 L687,12 M687,8 L683,12" stroke="#3c4043" stroke-width="1.3"/>
<path d="M705,10.5 H714 M709.5,6 V15" stroke="#3c4043" stroke-width="1.5"/>
<path d="M1169,8 L1173,12 L1177,8" fill="none" stroke="#5f6368"/>
<path d="M1201,10.5 H1208" stroke="#3c4043"/>
<path d="M1231.5,8.5 H1237 V13.5 H1231.5Z M1233,8.5 V7 H1238.5 V12 H1237" fill="none" stroke="#3c4043"/>
<path d="M1260,6.5 L1268,14.5 M1268,6.5 L1260,14.5" stroke="#3c4043"/>
<path d="M19,34 H10 M14,29.5 L9.5,34 L14,38.5" fill="none" stroke="#5f6368" stroke-width="1.5"/>
<path d="M31,34 H40 M36,29.5 L40.5,34 L36,38.5" fill="none" stroke="#bcc0c4" stroke-width="1.5"/>
<path d="M61,31 A5,5 0 1 0 62,35.5 M61.5,28.5 V32 H58" fill="none" stroke="#5f6368" stroke-width="1.4"/>
<path d="M81,33 H86 V38 H81Z" fill="#4c5157"/><path d="M82,33 V31.5 C82,29.5 85,29.5 85,31.5 V33" fill="none" stroke="#4c5157"/>
<path d="M1149,36 C1150,32 1152,31 1154,31 V29 L1158,32.5 L1154,36 V33.5 C1152,33.5 1151,34 1149,36Z M1148,30 V38 H1157 V36" fill="none" stroke="#5f6368"/>
<path d="M1175,29 L1176.5,32.5 L1180,33 L1177.5,35.5 L1178.3,39 L1175,37 L1171.7,39 L1172.5,35.5 L1170,33 L1173.5,32.5Z" fill="none" stroke="#4c5157" stroke-width="1.2"/>
<path d="M1197,31 H1200 V29 C1200,28 1202,28 1202,29 V31 H1205 V34 H1207 C1208,34 1208,36 1207,36 H1205 V39 H1197Z" fill="#4c5157"/>
<rect x="1218.5" y="29.5" width="9" height="9" fill="none" stroke="#3c4043" stroke-width="1.3"/><rect x="1223" y="29.5" width="4.5" height="9" fill="#3c4043"/>
<circle cx="1243" cy="34" r="7" fill="#d6e3f4"/><circle cx="1243" cy="32" r="2" fill="#3c4043"/><path d="M1239.5,38 C1240,34.5 1246,34.5 1246.5,38Z" fill="#3c4043"/>
<circle cx="1265" cy="30" r="1" fill="#4c5157"/><circle cx="1265" cy="34" r="1" fill="#4c5157"/><circle cx="1265" cy="38" r="1" fill="#4c5157"/>
<path d="M10,52 C13,50 17,50 20,52 V55 H10Z" fill="#e6e6ee"/><path d="M10,54 H20 V57 H10Z" fill="#3a56a8"/><path d="M10,57 H20 C18,61 12,61 10,57Z" fill="#cf3a3a"/>
<circle cx="115" cy="56" r="5.5" fill="#6f7f92"/><circle cx="115" cy="56" r="3" fill="#dfe6ee"/>
<path d="M214,51.5 L218,53 V56 C218,58 216,60 214,60.5 C212,60 210,58 210,56 V53Z" fill="#5f8fd8"/>
<circle cx="283" cy="56" r="5.5" fill="#4a7ab8"/><circle cx="283" cy="56" r="3" fill="#e5edf6"/>
<rect x="327" y="50" width="11" height="12" fill="#e89a2c"/><path d="M332.5,52 L335.5,54.5 L333,60 L330,54.5Z" fill="#fff"/>
<circle cx="403" cy="56" r="5.5" fill="#2d6fb5"/><path d="M399,54 H407 M401,60 L403,54 L405,60" stroke="#fff"/>
<path d="M498,59 L505,51 L510,54 L506,61Z" fill="#2f7fb0"/><path d="M499,53 L506,61" stroke="#59b5d8" stroke-width="2"/>
<path d="M609,51.5 L613,53 V56 C613,58 611,60 609,60.5 C607,60 605,58 605,56 V53Z" fill="#4a6aa8"/>
</svg>

<div style="position:absolute;left:0;top:693px;width:1280px;height:27px;background:#1d2a2c"></div>
<div style="position:absolute;left:163px;top:693px;width:32px;height:27px;background:#4b5556"></div>
<svg width="1280" height="27" style="left:0;top:693px">
<path d="M11,9 L15.5,8.3 V13 H11Z M16.5,8 L22,7 V13 H16.5Z M11,14 H15.5 V18.7 L11,18Z M16.5,14 H22 V20 L16.5,19Z" fill="#fff"/>
<circle cx="49" cy="11" r="5.5" fill="none" stroke="#fff" stroke-width="1.4"/><path d="M45.5,15.5 L42,20" stroke="#fff" stroke-width="1.6"/>
<path d="M76,9 H80.5 V13 H76Z M76,15.5 H80.5 V19 H76Z M83,8 V20 M85,8 V20" fill="none" stroke="#d9dcdd"/>
<circle cx="114" cy="13" r="8" fill="#1f9bd6"/><path d="M106,13 C108,6 118,4 122,11 C118,8 112,10 113,14 C114,18 119,19 121,17 C118,22 108,22 106,13Z" fill="#2ac0a0"/><path d="M108,18 C106,14 108,10 112,9 C110,13 112,19 116,21 C113,21.5 110,21 108,18Z" fill="#1560a8"/>
<path d="M140,8 H146 L148,10 H154 V20 H140Z" fill="#f2c84b"/><rect x="140" y="12" width="14" height="8" fill="#e6b43a"/><rect x="144" y="14" width="6" height="4" fill="#3a8fd0"/>
<circle cx="178" cy="13" r="8" fill="none" stroke="#dfe4ea" stroke-width="1.6"/><circle cx="180" cy="13" r="2.3" fill="#e2336a"/>
<circle cx="212" cy="13" r="8" fill="#e6473a"/><path d="M212,13 L205,17 C206,20 209,21 212,21Z" fill="#2fa84f"/><path d="M212,13 L219,17 C220,13 219,9 216,7 L212,13Z" fill="#f5c33b"/><circle cx="212" cy="13" r="3.6" fill="#fff"/><circle cx="212" cy="13" r="2.7" fill="#3a82e6"/>
<circle cx="244" cy="13" r="8" fill="#2c4a78"/><path d="M240,8 L244,13.5 L248,8 M244,13 V19" fill="none" stroke="#fff" stroke-width="1.8"/>
<rect x="273" y="6" width="12" height="14" fill="#2a78d6"/><rect x="269" y="9" width="9" height="9" fill="#1a5cb0"/><text x="270.5" y="16.5" font-size="7" font-weight="bold" fill="#fff">W</text>
<path d="M133,26 H159 M163,26 H195 M199,26 H228 M232,26 H258 M264,26 H290" stroke="#8cc0e8" stroke-width="1.5"/>
<path d="M1101,15 L1105,11 L1109,15" fill="none" stroke="#e3e5e6"/>
<rect x="1116" y="7" width="11" height="12" fill="#e9f3ea"/><path d="M1121.5,16 C1118,13 1118,10.5 1120,10.5 C1121,10.5 1121.5,11.5 1121.5,11.5 C1121.5,11.5 1122,10.5 1123,10.5 C1125,10.5 1125,13 1121.5,16Z" fill="#e01f5f"/>
<path d="M1134,10 H1140 V16 H1134Z M1141,12 L1143,11 V15 L1141,14 M1135,18 H1139" fill="none" stroke="#dfe2e3"/>
<path d="M1148,9 H1157 V16 H1148Z M1151,18 H1154" fill="none" stroke="#dfe2e3" stroke-dasharray="3 1"/>
<path d="M1164,11 H1166 L1169,8.5 V17.5 L1166,15 H1164Z M1171,10.5 C1172,12 1172,14 1171,15.5 M1173,9 C1175,11 1175,15 1173,17" fill="none" stroke="#c9cdce"/>
<path d="M1253,7 H1264 V15 H1256 L1253,17Z" fill="#e5e7e8"/><path d="M1255,9.5 H1262 M1255,12 H1262" stroke="#1d2a2c"/>
<circle cx="1263" cy="17" r="6" fill="#1d2a2c" stroke="#7a8486" stroke-width=".6"/>
<text x="1181" y="16.5" font-size="8" fill="#e3e6e7">РУС</text>
<text x="1213" y="10.5" font-size="8" fill="#e3e6e7">11:47</text>
<text x="1205" y="22.5" font-size="8" fill="#e3e6e7">05.02.2026</text>
<text x="1258.5" y="20" font-size="8" fill="#fff">20</text>
</svg>
</body></html>
